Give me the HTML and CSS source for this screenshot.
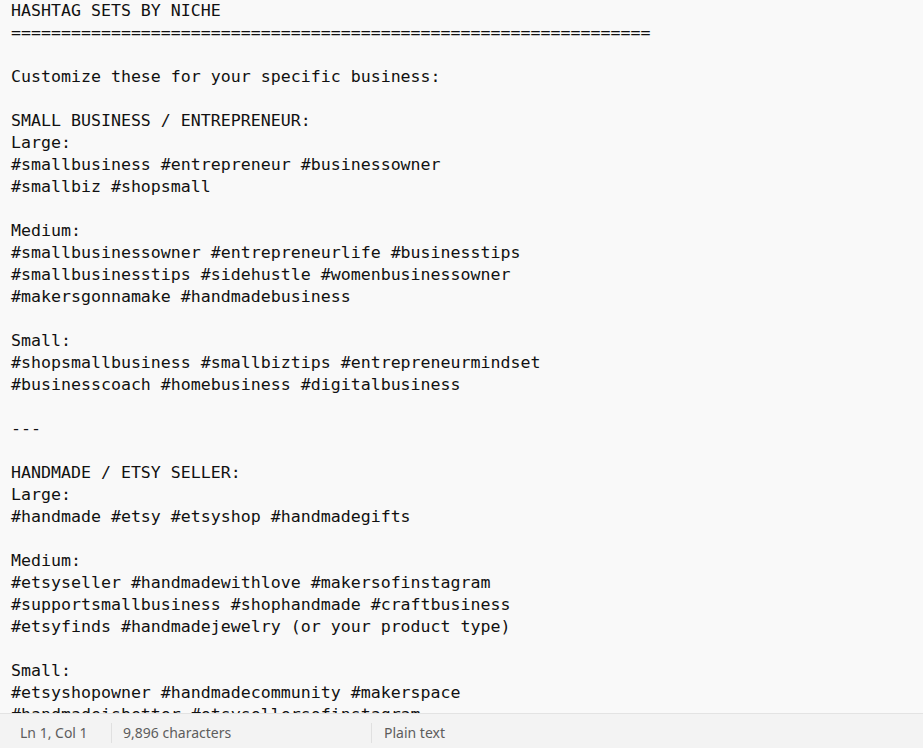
FILE: index.html
```html
<!DOCTYPE html>
<html>
<head>
<meta charset="utf-8">
<link rel="stylesheet" href="styles.css">
</head>
<body>
<div class="app">
<main class="editor"><pre class="text">HASHTAG SETS BY NICHE
================================================================

Customize these for your specific business:

SMALL BUSINESS / ENTREPRENEUR:
Large:
#smallbusiness #entrepreneur #businessowner
#smallbiz #shopsmall

Medium:
#smallbusinessowner #entrepreneurlife #businesstips
#smallbusinesstips #sidehustle #womenbusinessowner
#makersgonnamake #handmadebusiness

Small:
#shopsmallbusiness #smallbiztips #entrepreneurmindset
#businesscoach #homebusiness #digitalbusiness

---

HANDMADE / ETSY SELLER:
Large:
#handmade #etsy #etsyshop #handmadegifts

Medium:
#etsyseller #handmadewithlove #makersofinstagram
#supportsmallbusiness #shophandmade #craftbusiness
#etsyfinds #handmadejewelry (or your product type)

Small:
#etsyshopowner #handmadecommunity #makerspace
#handmadeisbetter #etsysellersofinstagram</pre></main>
<footer class="status">
<div class="seg seg-pos">Ln 1, Col 1</div>
<div class="seg seg-count">9,896 characters</div>
<div class="seg seg-type">Plain text</div>
</footer>
</div>
</body>
</html>
```
FILE: styles.css
```css
html, body {
  margin: 0;
  padding: 0;
  height: 100%;
  overflow: hidden;
}
.app {
  display: flex;
  flex-direction: column;
  height: 748px;
  width: 923px;
  background: #f9f9f9;
}
.editor {
  flex: 1;
  min-height: 0;
  overflow: hidden;
  background: #f9f9f9;
  padding: 0 0 0 11px;
}
.text {
  margin: 0;
  font-family: "DejaVu Sans Mono", "Liberation Mono", monospace;
  font-size: 16.6px;
  line-height: 22px;
  color: #111111;
  white-space: pre;
}
.status {
  height: 35px;
  box-sizing: border-box;
  padding-top: 3px;
  flex: none;
  border-top: 1px solid #e3e3e3;
  background: #f3f3f3;
  display: flex;
  align-items: center;
  font-family: "Noto Sans", "Open Sans", sans-serif;
  font-size: 14px;
  color: #5d5d5d;
}
.seg {
  box-sizing: border-box;
  height: 20px;
  line-height: 20px;
  white-space: nowrap;
}
.seg-pos {
  width: 111px;
  padding-left: 20px;
}
.seg-count {
  width: 260px;
  padding-left: 11px;
  border-left: 1px solid #e0e0e0;
}
.seg-type {
  padding-left: 12px;
  border-left: 1px solid #e0e0e0;
}
```
